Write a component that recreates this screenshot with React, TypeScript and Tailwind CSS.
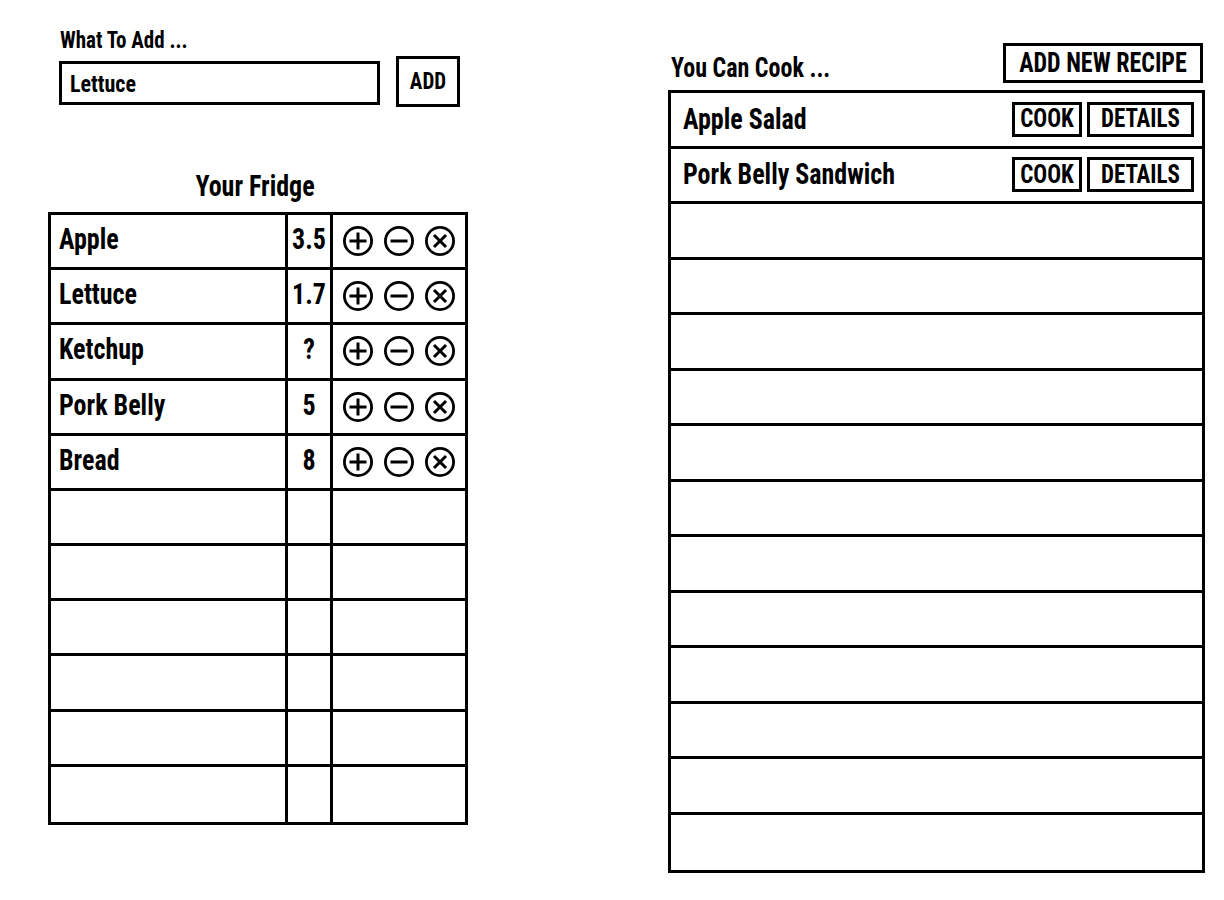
import React from "react";

const F =
  "font-['Roboto_Condensed','Roboto','Open_Sans',sans-serif] font-stretch-condensed font-bold text-black";
const T = "inline-block scale-y-[1.12]";

function Plus() {
  return (
    <svg width="30" height="30" viewBox="0 0 30 30" fill="none" stroke="black">
      <circle cx="15" cy="15" r="13.6" strokeWidth="2.8" />
      <line x1="6.5" y1="15" x2="23.5" y2="15" strokeWidth="3" />
      <line x1="15" y1="6.5" x2="15" y2="23.5" strokeWidth="3" />
    </svg>
  );
}
function Minus() {
  return (
    <svg width="30" height="30" viewBox="0 0 30 30" fill="none" stroke="black">
      <circle cx="15" cy="15" r="13.6" strokeWidth="2.8" />
      <line x1="6.5" y1="15" x2="23.5" y2="15" strokeWidth="3" />
    </svg>
  );
}
function Times() {
  return (
    <svg width="30" height="30" viewBox="0 0 30 30" fill="none" stroke="black">
      <circle cx="15" cy="15" r="13.6" strokeWidth="2.8" />
      <line x1="9" y1="9" x2="21" y2="21" strokeWidth="3" />
      <line x1="21" y1="9" x2="9" y2="21" strokeWidth="3" />
    </svg>
  );
}

const fridge: { name: string; qty: string }[] = [
  { name: "Apple", qty: "3.5" },
  { name: "Lettuce", qty: "1.7" },
  { name: "Ketchup", qty: "?" },
  { name: "Pork Belly", qty: "5" },
  { name: "Bread", qty: "8" },
];

const recipes = ["Apple Salad", "Pork Belly Sandwich"];

export default function App() {
  const fridgeRows = Array.from({ length: 11 }, (_, i) => fridge[i]);
  const recipeRows = Array.from({ length: 14 }, (_, i) => recipes[i]);
  return (
    <div className={`${F} flex w-[1224px] h-[900px] bg-white`}>
      {/* Left column */}
      <div className="ml-[48px] w-[420px] pt-[28px] flex flex-col">
        <div className="ml-[12px] text-[21px] leading-[24px] whitespace-nowrap">
          <span className={T}>What To Add ...</span>
        </div>
        <div className="mt-[4px] flex items-start">
          <div className="ml-[11px] mt-[5px] w-[321px] h-[44px] border-[3px] border-black flex items-center pl-[8px] text-[22px]">
            <span className={T}>Lettuce</span>
          </div>
          <div className="ml-[16px] w-[64px] h-[51px] border-[3px] border-black flex items-center justify-center text-[21px]">
            <span className={T}>ADD</span>
          </div>
        </div>
        <div className="mt-[64px] text-center text-[26px] leading-[30px] pr-[6px]">
          <span className={T}>Your Fridge</span>
        </div>
        <div className="mt-[11px] w-[420px] h-[613px] border-[3px] border-black grid grid-rows-[repeat(11,1fr)]">
          {fridgeRows.map((r, i) => (
            <div
              key={i}
              className={`grid grid-cols-[237px_45px_1fr] ${i < 10 ? "border-b-[3px] border-black" : ""}`}
            >
              <div className="border-r-[3px] border-black flex items-center pl-[8px] pb-[3px] text-[26px]">
                {r ? <span className={T}>{r.name}</span> : null}
              </div>
              <div className="border-r-[3px] border-black flex items-center justify-center pb-[3px] text-[26px]">
                {r ? <span className={T}>{r.qty}</span> : null}
              </div>
              <div className="flex items-center justify-center gap-[11px]">
                {r ? (
                  <>
                    <Plus />
                    <Minus />
                    <Times />
                  </>
                ) : null}
              </div>
            </div>
          ))}
        </div>
      </div>

      {/* Right column */}
      <div className="ml-[200px] w-[537px] pt-[43px] flex flex-col">
        <div className="flex items-end justify-between pr-[2px]">
          <div className="ml-[3px] text-[24px] leading-[30px] whitespace-nowrap">
            <span className={T}>You Can Cook ...</span>
          </div>
          <div className="w-[200px] h-[40px] border-[3px] border-black flex items-center justify-center text-[24px] whitespace-nowrap">
            <span className={T}>ADD NEW RECIPE</span>
          </div>
        </div>
        <div className="mt-[7px] w-[537px] h-[783px] border-[3px] border-black grid grid-rows-[repeat(14,1fr)]">
          {recipeRows.map((r, i) => (
            <div
              key={i}
              className={`flex items-center justify-between pr-[8px] pl-[12px] ${i < 13 ? "border-b-[3px] border-black" : ""}`}
            >
              <div className="text-[26px] whitespace-nowrap">{r ? <span className={T}>{r}</span> : null}</div>
              {r ? (
                <div className="flex items-center gap-[5px]">
                  <div className="w-[70px] h-[35px] border-[3px] border-black flex items-center justify-center text-[23px]">
                    <span className={T}>COOK</span>
                  </div>
                  <div className="w-[107px] h-[35px] border-[3px] border-black flex items-center justify-center text-[23px]">
                    <span className={T}>DETAILS</span>
                  </div>
                </div>
              ) : null}
            </div>
          ))}
        </div>
      </div>
    </div>
  );
}
